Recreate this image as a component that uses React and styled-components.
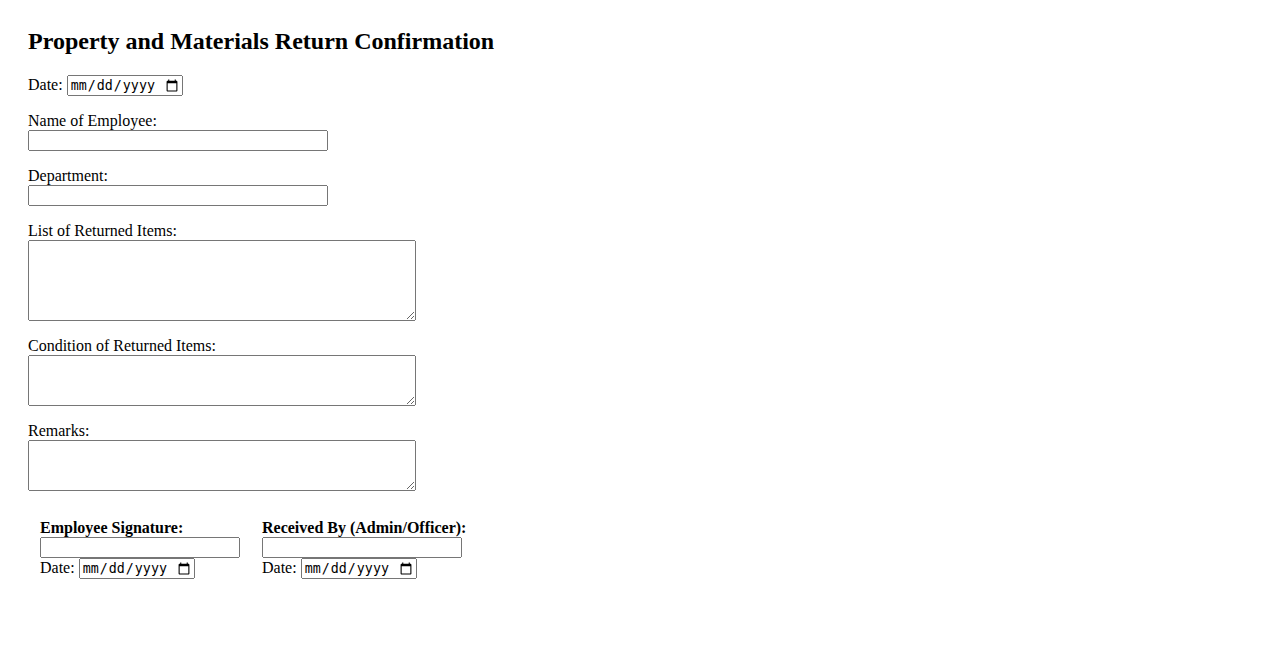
import React from 'react';
import styled, { createGlobalStyle } from 'styled-components';

const GlobalStyle = createGlobalStyle`
    body {
        margin: 0;
        font-family: "Liberation Serif", "Times New Roman", serif;
        font-size: 16px;
        color: #000;
        background-color: #fff;
    }
`

const Page = styled.div`
    padding: 28px;
`

const Title = styled.h2`
    font-size: 24px;
    font-weight: bold;
    margin: 0 0 20px 0;
`

const Group = styled.div`
    margin-bottom: 15px;
`

const Label = styled.label`
    display: ${props => (props.block ? 'block' : 'inline')};
    font-weight: ${props => (props.bold ? 'bold' : 'normal')};
    line-height: 19px;
`

const TextInput = styled.input`
    width: ${props => props.w || 300}px;
    height: 21px;
    box-sizing: border-box;
    display: block;
    margin: 0;
`

const DateInput = styled.input`
    width: 116px;
    height: 21px;
    box-sizing: border-box;
    margin: 0;
`

const TextArea = styled.textarea`
    width: 388px;
    box-sizing: border-box;
    display: block;
    margin: 0;
`

const SignTable = styled.table`
    border-spacing: 2px;

    td {
        padding: 10px;
        vertical-align: top;
    }
`

const fields = [
    { label: 'Name of Employee:', type: 'input' },
    { label: 'Department:', type: 'input' },
    { label: 'List of Returned Items:', type: 'area', rows: 5 },
    { label: 'Condition of Returned Items:', type: 'area', rows: 3 },
    { label: 'Remarks:', type: 'area', rows: 3 },
]

const signers = ['Employee Signature:', 'Received By (Admin/Officer):']

export default function App() {
    return (
        <Page>
            <GlobalStyle />
            <Title>Property and Materials Return Confirmation</Title>

            <Group>
                <Label>Date:</Label> <DateInput type="date" />
            </Group>

            {fields.map((f, i) => (
                <Group key={i}>
                    <Label block>{f.label}</Label>
                    {f.type === 'input' ? <TextInput type="text" /> : <TextArea rows={f.rows} />}
                </Group>
            ))}

            <SignTable>
                <tbody>
                    <tr>
                        {signers.map((s, i) => (
                            <td key={i}>
                                <Label block bold>{s}</Label>
                                <TextInput type="text" w={200} />
                                <Label>Date:</Label> <DateInput type="date" />
                            </td>
                        ))}
                    </tr>
                </tbody>
            </SignTable>
        </Page>
    )
}
